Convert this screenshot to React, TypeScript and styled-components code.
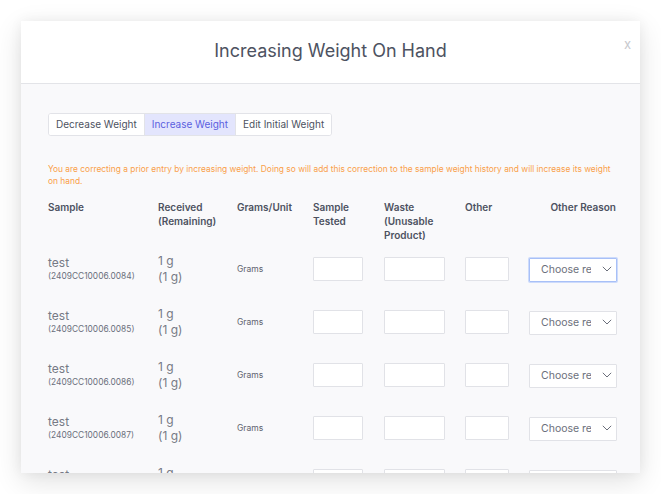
import React from "react";
import styled, { createGlobalStyle } from "styled-components";

const Global = createGlobalStyle`
  html, body { margin: 0; padding: 0; background: #ffffff; }
  body { font-family: Inter, "Noto Sans", sans-serif; }
  * { box-sizing: border-box; }
`;

const Page = styled.div`
  width: 661px;
  height: 494px;
  padding: 21px;
  overflow: hidden;
`;

const Modal = styled.div`
  width: 619px;
  height: 452px;
  display: flex;
  flex-direction: column;
  background: #f9f9fb;
  box-shadow: 0 8px 26px rgba(0, 0, 0, 0.12), 0 0 12px rgba(0, 0, 0, 0.05);
  overflow: hidden;
`;

const Header = styled.div`
  position: relative;
  flex: none;
  height: 63px;
  background: #ffffff;
  border-bottom: 1px solid #e3e4e8;
  display: flex;
  align-items: center;
  justify-content: center;
`;

const Title = styled.h1`
  margin: 0 0 3px 0;
  font-size: 18px;
  font-weight: 400;
  color: #4d5261;
`;

const Close = styled.span`
  position: absolute;
  right: 9px;
  top: 15px;
  font-size: 13px;
  color: #c8c9ce;
  line-height: 16px;
`;

const Body = styled.div`
  flex: 1;
  overflow: hidden;
  padding: 28px 23px 0 27px;
`;

const Tabs = styled.div`
  display: inline-flex;
  height: 23px;
  border: 1px solid #e2e3e8;
  border-radius: 3px;
  background: #ffffff;
  overflow: hidden;
`;

const Tab = styled.button<{ $active?: boolean; $first?: boolean }>`
  border: none;
  border-left: ${(p) => (p.$first ? "none" : "1px solid #e2e3e8")};
  background: ${(p) => (p.$active ? "#e3e5fd" : "#ffffff")};
  color: ${(p) => (p.$active ? "#5b5fe0" : "#4d5261")};
  font-family: Inter, "Noto Sans", sans-serif;
  font-size: 10px;
  padding: 0 7px;
  height: 100%;
  cursor: pointer;
`;

const Warning = styled.p`
  margin: 27px 0 0 0;
  font-size: 8.4px;
  line-height: 12px;
  color: #f9a04a;
`;

const Grid = styled.div`
  display: grid;
  grid-template-columns: 110px 79px 76px 71px 81px 64px 88px;
  align-items: center;
`;

const HeadRow = styled(Grid)`
  margin-top: 13px;
  align-items: start;
`;

const Th = styled.div<{ $right?: boolean }>`
  font-size: 10px;
  font-weight: 600;
  line-height: 14px;
  color: #4d5261;
  text-align: ${(p) => (p.$right ? "right" : "left")};
  padding-right: ${(p) => (p.$right ? "1px" : "8px")};
  height: 43px;
`;

const Row = styled(Grid)`
  height: 53px;
`;

const SampleCell = styled.div`
  display: flex;
  flex-direction: column;
`;

const SampleName = styled.span`
  font-size: 12px;
  line-height: 14px;
  color: #767a85;
`;

const SampleId = styled.span`
  font-size: 8.4px;
  line-height: 12px;
  color: #6b6f7b;
`;

const Amount = styled.div`
  font-size: 12px;
  line-height: 16px;
  color: #767a85;
`;

const Unit = styled.div`
  font-size: 8.5px;
  color: #5d616d;
`;

const Input = styled.input<{ $w: number }>`
  width: ${(p) => p.$w}px;
  height: 24px;
  border: 1px solid #e1e2e7;
  border-radius: 1px;
  background: #ffffff;
  padding: 0 6px;
  font-family: Inter, "Noto Sans", sans-serif;
  outline: none;
`;

const SelectWrap = styled.div`
  position: relative;
  width: 88px;
  height: 24px;
`;

const Select = styled.select<{ $focus?: boolean }>`
  appearance: none;
  -webkit-appearance: none;
  width: 100%;
  height: 100%;
  border: 1px solid ${(p) => (p.$focus ? "#a8c0f7" : "#e1e2e7")};
  box-shadow: ${(p) => (p.$focus ? "0 0 0 1px #cddbfb" : "none")};
  border-radius: 1px;
  background: #ffffff;
  padding: 0 25px 0 11px;
  font-family: Inter, "Noto Sans", sans-serif;
  font-size: 10.5px;
  color: #6b6f7b;
  outline: none;
`;

const Chevron = styled.svg`
  position: absolute;
  right: 5px;
  top: 9px;
  width: 10px;
  height: 6px;
  pointer-events: none;
`;

const rows = ["0084", "0085", "0086", "0087", "0088"];

export default function App() {
  return (
    <Page>
      <Global />
      <Modal>
        <Header>
          <Title>Increasing Weight On Hand</Title>
          <Close>x</Close>
        </Header>
        <Body>
          <Tabs>
            <Tab $first>Decrease Weight</Tab>
            <Tab $active>Increase Weight</Tab>
            <Tab>Edit Initial Weight</Tab>
          </Tabs>
          <Warning>
            You are correcting a prior entry by increasing weight. Doing so will add this correction to the sample
            weight history and will increase its weight on hand.
          </Warning>
          <HeadRow>
            <Th>Sample</Th>
            <Th>
              Received
              <br />
              (Remaining)
            </Th>
            <Th>Grams/Unit</Th>
            <Th>
              Sample
              <br />
              Tested
            </Th>
            <Th>
              Waste
              <br />
              (Unusable
              <br />
              Product)
            </Th>
            <Th>Other</Th>
            <Th $right>Other Reason</Th>
          </HeadRow>
          {rows.map((id, i) => (
            <Row key={id}>
              <SampleCell>
                <SampleName>test</SampleName>
                <SampleId>(2409CC10006.{id})</SampleId>
              </SampleCell>
              <Amount>
                1 g
                <br />
                (1 g)
              </Amount>
              <Unit>Grams</Unit>
              <Input $w={50} />
              <Input $w={61} />
              <Input $w={44} />
              <SelectWrap>
                <Select $focus={i === 0} defaultValue="">
                  <option value="">Choose reason</option>
                </Select>
                <Chevron viewBox="0 0 10 6" fill="none">
                  <path d="M0.8 0.8 L5 5 L9.2 0.8" stroke="#6b6f7b" strokeWidth="1" />
                </Chevron>
              </SelectWrap>
            </Row>
          ))}
        </Body>
      </Modal>
    </Page>
  );
}
